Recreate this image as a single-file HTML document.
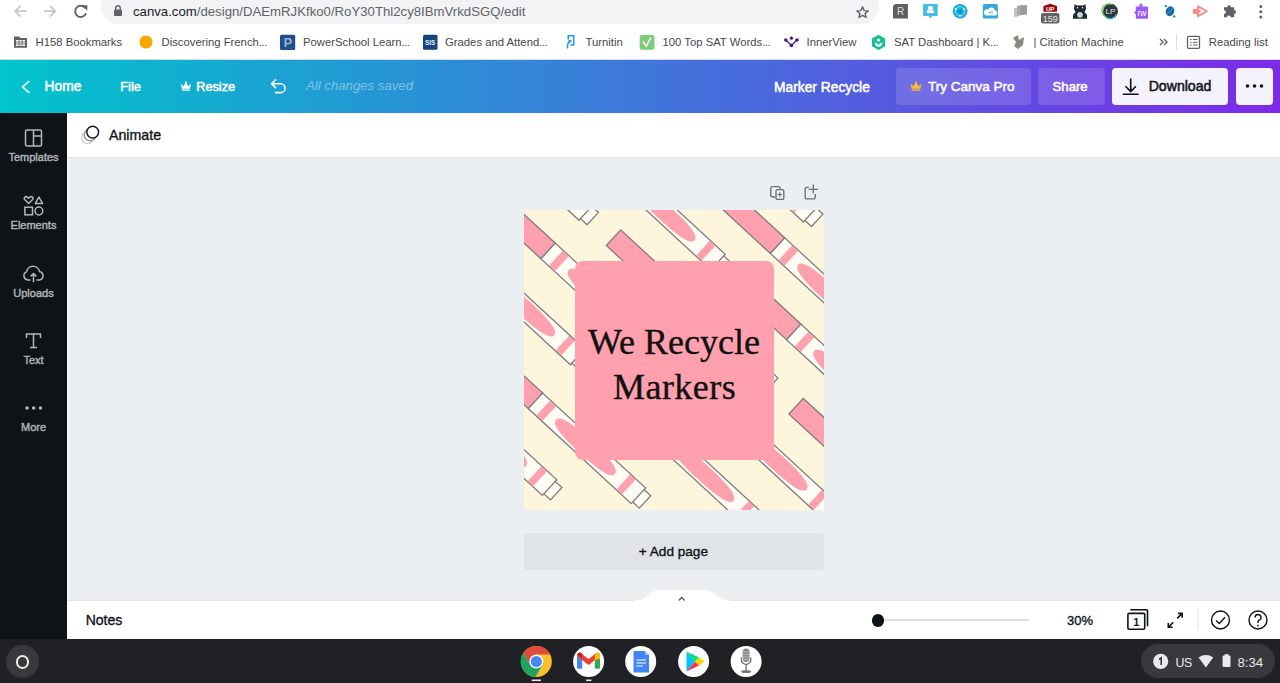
<!DOCTYPE html>
<html><head><meta charset="utf-8">
<style>
*{box-sizing:border-box;margin:0;padding:0}
html,body{width:1280px;height:683px;overflow:hidden;background:#fff;font-family:"Liberation Sans",sans-serif}
.abs{position:absolute}
.t{position:absolute;line-height:1;white-space:nowrap}
svg{position:absolute;overflow:visible}
#chrome{position:absolute;left:0;top:0;width:1280px;height:60px;background:#fff;border-bottom:1px solid #dadce0}
#url{position:absolute;left:101px;top:-12px;width:778px;height:36px;background:#f1f3f4;border-radius:18px}
.urltxt{left:133px;top:4.8px;font-size:13.2px;color:#5f6368}
.urltxt b{font-weight:normal;color:#202124}
.bm span{}
.bm{top:37.4px;font-size:11.3px;color:#45484c}
#hdr{position:absolute;left:0;top:60px;width:1280px;height:53px;background:linear-gradient(90deg,#00c4cc 0%,#7d2ae8 100%)}
.ht{color:#fff;font-size:13.2px;-webkit-text-stroke-width:.5px}
.sb{-webkit-text-stroke-width:.35px}
.btn{position:absolute;border-radius:4px}
#side{position:absolute;left:0;top:113px;width:67px;height:526px;background:#0e1318}
.sl{left:0;width:67px;text-align:center;color:#aeb1b4;font-size:11px;-webkit-text-stroke-width:.45px}
#tb{position:absolute;left:67px;top:113px;width:1213px;height:45px;background:#fff;border-bottom:1px solid #e0e2e6}
#work{position:absolute;left:67px;top:158px;width:1213px;height:442px;background:#eceff2}
#wl{position:absolute;left:67px;top:158px;width:1.5px;height:442px;background:#f5f6f8}
#notes{position:absolute;left:67px;top:600px;width:1213px;height:39px;background:#fff;border-top:1px solid #e3e5e8}
#task{position:absolute;left:0;top:639px;width:1280px;height:44px;background:#202124}
</style></head><body>
<div id="chrome">
  <div id="url"></div>
  <!-- back / fwd / reload -->
  <svg style="left:0;top:0" width="100" height="28">
    <path d="M26.5 11.2H16.2M20.6 5.8L15.2 11.2L20.6 16.6" fill="none" stroke="#c4c7c9" stroke-width="1.8"/>
    <path d="M44 11.2H54.3M49.9 5.8L55.3 11.2L49.9 16.6" fill="none" stroke="#c4c7c9" stroke-width="1.8"/>
    <path d="M85.3 8.2A5.6 5.6 0 1 0 86 13.2" fill="none" stroke="#5f6368" stroke-width="1.9"/>
    <path d="M81.8 5.2H87.3V10.7Z" fill="#5f6368"/>
  </svg>
  <svg style="left:110px;top:0" width="20" height="24">
    <rect x="4" y="9.5" width="8" height="6.5" rx="1" fill="#5f6368"/>
    <path d="M5.8 9.8V8A2.2 2.2 0 0 1 10.2 8V9.8" fill="none" stroke="#5f6368" stroke-width="1.5"/>
  </svg>
  <div class="t urltxt"><b>canva.com</b>/design/DAEmRJKfko0/RoY30Thl2cy8IBmVrkdSGQ/edit</div>
  <svg style="left:850px;top:0" width="30" height="28">
    <path d="M12.5 6.8L14.1 10.6L18.2 10.9L15.1 13.5L16.1 17.5L12.5 15.3L8.9 17.5L9.9 13.5L6.8 10.9L10.9 10.6Z" fill="none" stroke="#5f6368" stroke-width="1.4" stroke-linejoin="round"/>
  </svg>
  <!-- extensions -->
  <svg style="left:880px;top:0" width="400" height="28">
    <path d="M15 3.9H27.9V18.5H13V5.9Z" fill="#5f5f5f"/>
    <text x="20.5" y="15.2" font-family="Liberation Sans" font-size="10" fill="#dcdcdc" text-anchor="middle">R</text>
    <path d="M43.1 3.9H57.7V15.9H52.4L50.4 18.5L48.4 15.9H43.1Z" fill="#45bfe6"/>
    <rect x="48" y="6.3" width="4.8" height="3.7" rx="1" fill="#fff"/><path d="M46.8 13V11.2Q46.8 10.3 47.8 10.3H53Q54 10.3 54 11.2V13Z" fill="#fff"/>
    <circle cx="80.6" cy="11.6" r="7.4" fill="#9a9a9a" opacity=".45"/>
    <circle cx="80" cy="11.2" r="7.3" fill="#1aaede"/>
    <circle cx="80" cy="11.2" r="4.6" fill="none" stroke="#aee6f7" stroke-width=".8"/>
    <circle cx="80" cy="11.2" r="2" fill="#0f8fc4"/>
    <circle cx="76" cy="9" r=".9" fill="#fff"/><circle cx="84" cy="9" r=".9" fill="#fff"/><circle cx="80" cy="15.8" r=".9" fill="#fff"/>
    <rect x="102.8" y="3.9" width="15.1" height="14.6" rx="1.5" fill="#36a7da"/>
    <path d="M106.2 15.5H114.8A2.4 2.4 0 0 0 115 10.6A3.7 3.7 0 0 0 108.1 9.4A3 3 0 0 0 106.2 15.5Z" fill="#fff"/>
    <path d="M109 12.5H111M112 10.5V13.5" stroke="#36a7da" stroke-width=".9"/>
    <path d="M134 8.5L138.5 7.3V16.5L134 17.3Z" fill="#c2c2c2"/>
    <path d="M137 6L142 4.7V15L137 16Z" fill="#a9a9a9"/>
    <path d="M140.5 5.5L147 5V14.5L140.5 15.3Z" fill="#9a9a9a"/>
    <path d="M163.4 11.7V6L170.2 3.75L177 6V11.7Z" fill="#9b0b0b"/>
    <text x="170.2" y="11.2" font-family="Liberation Sans" font-weight="bold" font-size="6" fill="#fff" text-anchor="middle">UP</text>
    <rect x="161" y="13.1" width="18.4" height="10.3" rx="1.8" fill="#626262"/>
    <text x="170.2" y="21.7" font-family="Liberation Sans" font-size="9" fill="#e6e6e6" text-anchor="middle">159</text>
    <path d="M194.5 4.2L197 5.6H203L205.5 4.2L206 9L204.5 12L207 15V18.7H193V15L195.5 12L194 9Z" fill="#1c2a33"/>
    <circle cx="197.5" cy="7.8" r=".8" fill="#fff"/><circle cx="202.5" cy="7.8" r=".8" fill="#fff"/>
    <circle cx="200" cy="14.8" r="2.9" fill="#cfd4d8"/>
    <circle cx="230.5" cy="11.25" r="7.5" fill="#2e3740"/>
    <path d="M231.5 4.5A6.7 6.7 0 0 0 226 17" fill="none" stroke="#5fd33a" stroke-width="1.3"/>
    <path d="M226 17A6.7 6.7 0 0 0 236.5 14" fill="none" stroke="#2a9fc0" stroke-width="1.3"/>
    <text x="230.5" y="14.3" font-family="Liberation Sans" font-size="8" fill="#e8e8e8" text-anchor="middle">LP</text>
    <path d="M255.8 6.6H259.4V5.1A1.5 1.5 0 0 1 262.4 5.1V6.6H268V18.75H255.8V14A1.4 1.4 0 0 1 255.8 11.2Z" fill="#9b5cf6"/>
    <text x="262" y="15.6" font-family="Liberation Sans" font-size="8.5" fill="#fff" text-anchor="middle">rw</text>
    <ellipse cx="290" cy="11.25" rx="4.2" ry="5" transform="rotate(20 290 11.25)" fill="#1a6aa8"/>
    <path d="M287.5 14L292.5 8.5" stroke="#5fa8dc" stroke-width=".8"/>
    <circle cx="285.8" cy="6.1" r="1.2" fill="#1a80c4"/><circle cx="294.2" cy="16.4" r="1.2" fill="#1a80c4"/>
    <rect x="313" y="8.9" width="4.2" height="5.1" fill="#ff8585"/>
    <path d="M318 6.2L326.8 11.25L318 16.3Z" fill="none" stroke="#ff8585" stroke-width="1.9" stroke-linejoin="round"/>
    <path d="M318 9L321.5 11.25L318 13.5Z" fill="#ff8585"/>
    <path d="M344 7.2H347.2A1.9 1.9 0 0 1 351 7.2H354.2V10.2A1.9 1.9 0 0 1 354.2 14V17.3H350.8A1.9 1.9 0 0 0 347 17.3H344V14A1.9 1.9 0 0 0 344 10.2Z" fill="#5f6368"/>
    <circle cx="380.8" cy="6.6" r="1.5" fill="#5f6368"/><circle cx="380.8" cy="11.8" r="1.5" fill="#5f6368"/><circle cx="380.8" cy="17" r="1.5" fill="#5f6368"/>
  </svg>
  <!-- bookmark icons -->
  <svg style="left:0;top:28px" width="1280" height="31">
    <path d="M14 8.5H19L20.5 10H27V19.7H14Z" fill="#5f6368"/>
    <rect x="16" y="12" width="9" height="6" fill="#fff"/>
    <path d="M16 14H25M16 16H25M19 12V18M22 12V18" stroke="#5f6368" stroke-width=".8"/>
    <circle cx="146" cy="14" r="6.6" fill="#f2a900"/>
    <rect x="280" y="6.7" width="15.2" height="15.3" rx="1.5" fill="#1f4e8c"/>
    <text x="287.8" y="19" font-family="Liberation Sans" font-weight="bold" font-size="12.5" fill="#9db3d3" text-anchor="middle">P</text>
    <rect x="423" y="6.7" width="14.5" height="15" rx="1.5" fill="#14437f"/>
    <text x="430.2" y="16.8" font-family="Liberation Sans" font-weight="bold" font-size="6.3" fill="#e8eef7" text-anchor="middle">SIS</text>
    <path d="M568.2 11.5V7.8H573.7V17H570.5" fill="none" stroke="#2196f3" stroke-width="1.5"/>
    <path d="M570.3 13.2Q566.8 15 567.6 20.5" fill="none" stroke="#2196f3" stroke-width="1.5"/>
    <path d="M568.2 11.8L572.2 12.6L569.3 15.5Z" fill="#2196f3"/>
    <rect x="639.7" y="7" width="14.8" height="14.7" rx="2" fill="#7ecb7c"/>
    <path d="M643 13.5L646.3 18L651 9.5" fill="none" stroke="#fff" stroke-width="1.5"/>
    <path d="M785.8 12L791.4 17.4L797 12" fill="none" stroke="#4b1a7c" stroke-width="1.4"/>
    <circle cx="791.4" cy="10.2" r="1.6" fill="#4b1a7c"/><circle cx="785.8" cy="12" r="1.8" fill="#4b1a7c"/><circle cx="797" cy="12" r="1.8" fill="#4b1a7c"/><circle cx="791.4" cy="17.4" r="1.8" fill="#4b1a7c"/>
    <path d="M878.6 6.8L885.2 10.6V18.2L878.6 22L872 18.2V10.6Z" fill="#14bf96"/>
    <circle cx="878.6" cy="12" r="1.6" fill="#fff"/>
    <path d="M874.8 14.5Q875 18.6 878.6 18.8Q882.2 18.6 882.4 14.5Q879.5 14.8 878.6 17Q877.7 14.8 874.8 14.5Z" fill="#fff"/>
    <path d="M1013 10L1018 7L1019 12L1024 9L1023 17L1018 21L1014 18L1016 14Z" fill="#8a8a7e"/>
    <path d="M1160 11L1163 14L1160 17M1164 11L1167 14L1164 17" fill="none" stroke="#5f6368" stroke-width="1.4"/>
    <rect x="1176" y="6" width="1" height="16" fill="#dadce0"/>
    <rect x="1187.5" y="8.3" width="12" height="12" rx="1" fill="none" stroke="#5f6368" stroke-width="1.3"/>
    <path d="M1190 11.5H1191.5M1193 11.5H1197.5M1190 14.3H1191.5M1193 14.3H1197.5M1190 17H1191.5M1193 17H1197.5" stroke="#5f6368" stroke-width="1"/>
  </svg>
  <div class="t bm" style="left:35.5px">H158 Bookmarks</div>
  <div class="t bm" style="left:161.5px">Discovering French<span style="letter-spacing:-.45px">...</span></div>
  <div class="t bm" style="left:303px">PowerSchool Learn<span style="letter-spacing:-.45px">...</span></div>
  <div class="t bm" style="left:445px">Grades and Attend<span style="letter-spacing:-.45px">...</span></div>
  <div class="t bm" style="left:585.5px">Turnitin</div>
  <div class="t bm" style="left:662.5px">100 Top SAT Words<span style="letter-spacing:-.45px">...</span></div>
  <div class="t bm" style="left:806.5px">InnerView</div>
  <div class="t bm" style="left:894px">SAT Dashboard | K<span style="letter-spacing:-.45px">...</span></div>
  <div class="t bm" style="left:1033.5px">| Citation Machine</div>
  <div class="t bm" style="left:1208.8px">Reading list</div>
</div>

<div id="hdr">
  <div class="btn" style="left:895.6px;top:7.7px;width:135px;height:37px;background:rgba(255,255,255,.14)"></div>
  <div class="btn" style="left:1038px;top:8px;width:67px;height:36.5px;background:rgba(255,255,255,.14)"></div>
  <div class="btn" style="left:1112px;top:8px;width:116px;height:37px;background:#f4f2fc"></div>
  <div class="btn" style="left:1236px;top:8px;width:37px;height:37px;background:#f4f2fc"></div>
  <svg style="left:0;top:0" width="1280" height="53">
    <path d="M29.3 21L22.6 26.9L29.3 32.8" fill="none" stroke="#fff" stroke-width="1.6"/>
    <path d="M180.8 23.6L183.5 26.3L185.9 21.9L188.3 26.3L191 23.6L189.9 28.7H181.9Z" fill="#fff"/><circle cx="185.9" cy="22.2" r=".9" fill="#fff"/><rect x="181.9" y="29.4" width="8" height="1.3" fill="#fff"/>
    <path d="M276 19.3L271.6 23.7L276 28.1M271.6 23.7H280.6A4.45 4.45 0 0 1 280.6 32.6H275" fill="none" stroke="#fff" stroke-width="1.6"/>
    <path d="M910.5 23.6L913.3 26.3L916 21.9L918.7 26.3L921.5 23.6L920.4 28.7H911.6Z" fill="#ffbb2f"/><circle cx="916" cy="22.2" r=".9" fill="#ffbb2f"/><rect x="911.6" y="29.4" width="8.8" height="1.3" fill="#ffbb2f"/>
    <path d="M1130.7 18.6V31M1125.5 26.3L1130.7 31.5L1135.9 26.3M1122.8 34.3H1138.7" fill="none" stroke="#0e1318" stroke-width="1.6"/>
    <circle cx="1247.5" cy="26" r="1.8" fill="#0e1318"/><circle cx="1254.5" cy="26" r="1.8" fill="#0e1318"/><circle cx="1261.5" cy="26" r="1.8" fill="#0e1318"/>
  </svg>
  <div class="t ht" style="left:44.5px;top:20.00px;font-size:13.8px">Home</div>
  <div class="t ht" style="left:120.3px;top:20.90px;font-size:12.8px">File</div>
  <div class="t ht" style="left:196.3px;top:20.95px;font-size:12.7px">Resize</div>
  <div class="t" style="left:306px;top:19.4px;font-size:13.2px;font-style:italic;color:rgba(255,255,255,.42)">All changes saved</div>
  <div class="t ht" style="left:774px;top:20.80px;font-size:13.8px">Marker Recycle</div>
  <div class="t ht" style="left:928px;top:19.70px;font-size:13.5px">Try Canva Pro</div>
  <div class="t ht" style="left:1052.5px;top:20.10px;font-size:13.2px">Share</div>
  <div class="t ht" style="left:1148.7px;top:19.30px;font-size:14.1px;color:#0e1318">Download</div>
</div>

<div id="side">
  <svg style="left:0;top:0" width="67" height="526" fill="none" stroke="#b4b6b9" stroke-width="1.5">
    <rect x="25.5" y="17" width="16" height="16" rx="1.5"/>
    <path d="M33.5 17V33M33.5 23H41.5"/>
    <path d="M28.6 90.5L24.6 86.5Q23.5 85.2 24.6 84.2Q25.9 83.1 27.3 84.1L28.6 85.3L29.9 84.1Q31.3 83.1 32.6 84.2Q33.7 85.2 32.6 86.5Z" stroke-linejoin="round"/>
    <path d="M38.9 84L42.6 90.6H35.2Z" stroke-linejoin="round"/>
    <rect x="24.9" y="94.2" width="7.6" height="7.6"/>
    <circle cx="38.9" cy="98" r="3.9"/>
    <path d="M30.5 167H27.8A4.2 4.2 0 0 1 26.6 158.9A6.6 6.6 0 0 1 39.6 158.6A4.3 4.3 0 0 1 39.6 167H36.5M33.5 169.3V160.5M30.6 163.4L33.5 160.5L36.4 163.4"/>
    <path d="M26.5 225V221H40.5V225M33.5 221V234.5M30 234.5H37"/>
  </svg>
  <svg style="left:0;top:0" width="67" height="526">
    <circle cx="27" cy="295" r="1.8" fill="#b4b6b9"/><circle cx="33.7" cy="295" r="1.8" fill="#b4b6b9"/><circle cx="40.4" cy="295" r="1.8" fill="#b4b6b9"/>
  </svg>
  <div class="t sl" style="top:39.4px">Templates</div>
  <div class="t sl" style="top:106.7px">Elements</div>
  <div class="t sl" style="top:174.7px">Uploads</div>
  <div class="t sl" style="top:241.9px">Text</div>
  <div class="t sl" style="top:309.4px">More</div>
</div>

<div id="tb">
  <svg style="left:0;top:0" width="60" height="44">
    <circle cx="20.6" cy="24.6" r="5.9" fill="#fff" stroke="#c9cbce" stroke-width="1.2"/>
    <circle cx="23.1" cy="21.9" r="5.9" fill="#fff" stroke="#8e9195" stroke-width="1.3"/>
    <circle cx="25.7" cy="19.1" r="5.9" fill="#fff" stroke="#1a1d21" stroke-width="1.5"/>
  </svg>
  <div class="t sb" style="left:42px;top:14.8px;font-size:14.2px;color:#0e1318">Animate</div>
</div>

<div id="work">
  <svg style="left:700px;top:25px" width="60" height="24" fill="none" stroke="#6b6e72" stroke-width="1.35">
    <path d="M8 14H5.2A1.5 1.5 0 0 1 3.75 12.5V5.1A1.5 1.5 0 0 1 5.25 3.65H11.6A1.5 1.5 0 0 1 13.1 5.15V6.6"/>
    <rect x="9" y="6.6" width="7.8" height="9.8" rx="1.5"/>
    <path d="M12.8 9.3V13.7M10.6 11.5H15" stroke-width="1.15"/>
    <path d="M42 4.35H39.65A1.5 1.5 0 0 0 38.15 5.85V14.35A1.5 1.5 0 0 0 39.65 15.85H46.75A1.5 1.5 0 0 0 48.25 14.35V11M46.3 1.5V10.3M41.6 6.3H51"/>
  </svg>
  <div id="design" class="abs" style="left:457px;top:52px;width:300px;height:300px;background:#fef5dd;overflow:hidden">
<svg width="300" height="300" viewBox="0 0 300 300" style="left:0;top:0">
<rect width="300" height="300" fill="#fef5dd"/>
<g transform="translate(0 -260.3) rotate(42.7)"><rect x="183.0" y="-10.6" width="67" height="21.2" fill="#ffa0af" stroke="#7d7d7d" stroke-width="1.3"/><rect x="388.0" y="-8.4" width="11" height="16.8" fill="#fffcf3" stroke="#7d7d7d" stroke-width="1.3"/><rect x="250.0" y="-10.6" width="140" height="21.2" fill="#fffcf3" stroke="#7d7d7d" stroke-width="1.3"/><rect x="260.6" y="-9.95" width="8.1" height="19.90" fill="#ffa0af"/><rect x="369.5" y="-9.95" width="7.5" height="19.90" fill="#ffa0af"/><path d="M278.0 0C278.0 -5.90 291.0 -8.2 318.0 -8.2C345.0 -8.2 358.0 -5.90 358.0 0C358.0 5.90 345.0 8.2 318.0 8.2C291.0 8.2 278.0 5.90 278.0 0Z" fill="#ffa0af"/></g>
<g transform="translate(0 -198.3) rotate(42.7)"><rect x="278.0" y="-10.6" width="67" height="21.2" fill="#ffa0af" stroke="#7d7d7d" stroke-width="1.3"/><rect x="483.0" y="-8.4" width="11" height="16.8" fill="#fffcf3" stroke="#7d7d7d" stroke-width="1.3"/><rect x="345.0" y="-10.6" width="140" height="21.2" fill="#fffcf3" stroke="#7d7d7d" stroke-width="1.3"/><rect x="355.6" y="-9.95" width="8.1" height="19.90" fill="#ffa0af"/><rect x="464.5" y="-9.95" width="7.5" height="19.90" fill="#ffa0af"/><path d="M373.0 0C373.0 -5.90 386.0 -8.2 413.0 -8.2C440.0 -8.2 453.0 -5.90 453.0 0C453.0 5.90 440.0 8.2 413.0 8.2C386.0 8.2 373.0 5.90 373.0 0Z" fill="#ffa0af"/></g>
<g transform="translate(0 -127) rotate(42.7)"><rect x="57.0" y="-10.6" width="67" height="21.2" fill="#ffa0af" stroke="#7d7d7d" stroke-width="1.3"/><rect x="262.0" y="-8.4" width="11" height="16.8" fill="#fffcf3" stroke="#7d7d7d" stroke-width="1.3"/><rect x="124.0" y="-10.6" width="140" height="21.2" fill="#fffcf3" stroke="#7d7d7d" stroke-width="1.3"/><rect x="134.6" y="-9.95" width="8.1" height="19.90" fill="#ffa0af"/><rect x="243.5" y="-9.95" width="7.5" height="19.90" fill="#ffa0af"/><path d="M152.0 0C152.0 -5.90 165.0 -8.2 192.0 -8.2C219.0 -8.2 232.0 -5.90 232.0 0C232.0 5.90 219.0 8.2 192.0 8.2C165.0 8.2 152.0 5.90 152.0 0Z" fill="#ffa0af"/></g>
<g transform="translate(0 -127) rotate(42.7)"><rect x="300.0" y="-10.6" width="67" height="21.2" fill="#ffa0af" stroke="#7d7d7d" stroke-width="1.3"/><rect x="505.0" y="-8.4" width="11" height="16.8" fill="#fffcf3" stroke="#7d7d7d" stroke-width="1.3"/><rect x="367.0" y="-10.6" width="140" height="21.2" fill="#fffcf3" stroke="#7d7d7d" stroke-width="1.3"/><rect x="377.6" y="-9.95" width="8.1" height="19.90" fill="#ffa0af"/><rect x="486.5" y="-9.95" width="7.5" height="19.90" fill="#ffa0af"/><path d="M395.0 0C395.0 -5.90 408.0 -8.2 435.0 -8.2C462.0 -8.2 475.0 -5.90 475.0 0C475.0 5.90 462.0 8.2 435.0 8.2C408.0 8.2 395.0 5.90 395.0 0Z" fill="#ffa0af"/></g>
<g transform="translate(0 -54.9) rotate(42.7)"><rect x="-122.4" y="-10.6" width="67" height="21.2" fill="#ffa0af" stroke="#7d7d7d" stroke-width="1.3"/><rect x="82.6" y="-8.4" width="11" height="16.8" fill="#fffcf3" stroke="#7d7d7d" stroke-width="1.3"/><rect x="-55.4" y="-10.6" width="140" height="21.2" fill="#fffcf3" stroke="#7d7d7d" stroke-width="1.3"/><rect x="-44.8" y="-9.95" width="8.1" height="19.90" fill="#ffa0af"/><rect x="64.1" y="-9.95" width="7.5" height="19.90" fill="#ffa0af"/><path d="M-27.4 0C-27.4 -5.90 -14.4 -8.2 12.6 -8.2C39.6 -8.2 52.6 -5.90 52.6 0C52.6 5.90 39.6 8.2 12.6 8.2C-14.4 8.2 -27.4 5.90 -27.4 0Z" fill="#ffa0af"/></g>
<g transform="translate(0 -54.9) rotate(42.7)"><rect x="121.8" y="-10.6" width="67" height="21.2" fill="#ffa0af" stroke="#7d7d7d" stroke-width="1.3"/><rect x="326.8" y="-8.4" width="11" height="16.8" fill="#fffcf3" stroke="#7d7d7d" stroke-width="1.3"/><rect x="188.8" y="-10.6" width="140" height="21.2" fill="#fffcf3" stroke="#7d7d7d" stroke-width="1.3"/><rect x="199.3" y="-9.95" width="8.1" height="19.90" fill="#ffa0af"/><rect x="308.2" y="-9.95" width="7.5" height="19.90" fill="#ffa0af"/><path d="M216.8 0C216.8 -5.90 229.8 -8.2 256.8 -8.2C283.8 -8.2 296.8 -5.90 296.8 0C296.8 5.90 283.8 8.2 256.8 8.2C229.8 8.2 216.8 5.90 216.8 0Z" fill="#ffa0af"/></g>
<g transform="translate(0 -54.9) rotate(42.7)"><rect x="370.2" y="-10.6" width="67" height="21.2" fill="#ffa0af" stroke="#7d7d7d" stroke-width="1.3"/><rect x="575.2" y="-8.4" width="11" height="16.8" fill="#fffcf3" stroke="#7d7d7d" stroke-width="1.3"/><rect x="437.2" y="-10.6" width="140" height="21.2" fill="#fffcf3" stroke="#7d7d7d" stroke-width="1.3"/><rect x="447.9" y="-9.95" width="8.1" height="19.90" fill="#ffa0af"/><rect x="556.8" y="-9.95" width="7.5" height="19.90" fill="#ffa0af"/><path d="M465.2 0C465.2 -5.90 478.2 -8.2 505.2 -8.2C532.2 -8.2 545.2 -5.90 545.2 0C545.2 5.90 532.2 8.2 505.2 8.2C478.2 8.2 465.2 5.90 465.2 0Z" fill="#ffa0af"/></g>
<g transform="translate(0 18.7) rotate(42.7)"><rect x="-34.2" y="-10.6" width="67" height="21.2" fill="#ffa0af" stroke="#7d7d7d" stroke-width="1.3"/><rect x="170.8" y="-8.4" width="11" height="16.8" fill="#fffcf3" stroke="#7d7d7d" stroke-width="1.3"/><rect x="32.8" y="-10.6" width="140" height="21.2" fill="#fffcf3" stroke="#7d7d7d" stroke-width="1.3"/><rect x="43.4" y="-9.95" width="8.1" height="19.90" fill="#ffa0af"/><rect x="152.3" y="-9.95" width="7.5" height="19.90" fill="#ffa0af"/><path d="M60.8 0C60.8 -5.90 73.8 -8.2 100.8 -8.2C127.8 -8.2 140.8 -5.90 140.8 0C140.8 5.90 127.8 8.2 100.8 8.2C73.8 8.2 60.8 5.90 60.8 0Z" fill="#ffa0af"/></g>
<g transform="translate(0 18.7) rotate(42.7)"><rect x="209.6" y="-10.6" width="67" height="21.2" fill="#ffa0af" stroke="#7d7d7d" stroke-width="1.3"/><rect x="414.6" y="-8.4" width="11" height="16.8" fill="#fffcf3" stroke="#7d7d7d" stroke-width="1.3"/><rect x="276.6" y="-10.6" width="140" height="21.2" fill="#fffcf3" stroke="#7d7d7d" stroke-width="1.3"/><rect x="287.2" y="-9.95" width="8.1" height="19.90" fill="#ffa0af"/><rect x="396.1" y="-9.95" width="7.5" height="19.90" fill="#ffa0af"/><path d="M304.6 0C304.6 -5.90 317.6 -8.2 344.6 -8.2C371.6 -8.2 384.6 -5.90 384.6 0C384.6 5.90 371.6 8.2 344.6 8.2C317.6 8.2 304.6 5.90 304.6 0Z" fill="#ffa0af"/></g>
<g transform="translate(0 97.5) rotate(42.7)"><rect x="-134.1" y="-10.6" width="67" height="21.2" fill="#ffa0af" stroke="#7d7d7d" stroke-width="1.3"/><rect x="70.9" y="-8.4" width="11" height="16.8" fill="#fffcf3" stroke="#7d7d7d" stroke-width="1.3"/><rect x="-67.1" y="-10.6" width="140" height="21.2" fill="#fffcf3" stroke="#7d7d7d" stroke-width="1.3"/><rect x="-56.5" y="-9.95" width="8.1" height="19.90" fill="#ffa0af"/><rect x="52.4" y="-9.95" width="7.5" height="19.90" fill="#ffa0af"/><path d="M-39.1 0C-39.1 -5.90 -26.1 -8.2 0.9 -8.2C27.9 -8.2 40.9 -5.90 40.9 0C40.9 5.90 27.9 8.2 0.9 8.2C-26.1 8.2 -39.1 5.90 -39.1 0Z" fill="#ffa0af"/></g>
<g transform="translate(0 97.5) rotate(42.7)"><rect x="109.9" y="-10.6" width="67" height="21.2" fill="#ffa0af" stroke="#7d7d7d" stroke-width="1.3"/><rect x="314.9" y="-8.4" width="11" height="16.8" fill="#fffcf3" stroke="#7d7d7d" stroke-width="1.3"/><rect x="176.9" y="-10.6" width="140" height="21.2" fill="#fffcf3" stroke="#7d7d7d" stroke-width="1.3"/><rect x="187.5" y="-9.95" width="8.1" height="19.90" fill="#ffa0af"/><rect x="296.4" y="-9.95" width="7.5" height="19.90" fill="#ffa0af"/><path d="M204.9 0C204.9 -5.90 217.9 -8.2 244.9 -8.2C271.9 -8.2 284.9 -5.90 284.9 0C284.9 5.90 271.9 8.2 244.9 8.2C217.9 8.2 204.9 5.90 204.9 0Z" fill="#ffa0af"/></g>
<g transform="translate(0 180.2) rotate(42.7)"><rect x="-51.3" y="-10.6" width="67" height="21.2" fill="#ffa0af" stroke="#7d7d7d" stroke-width="1.3"/><rect x="153.7" y="-8.4" width="11" height="16.8" fill="#fffcf3" stroke="#7d7d7d" stroke-width="1.3"/><rect x="15.7" y="-10.6" width="140" height="21.2" fill="#fffcf3" stroke="#7d7d7d" stroke-width="1.3"/><rect x="26.3" y="-9.95" width="8.1" height="19.90" fill="#ffa0af"/><rect x="135.2" y="-9.95" width="7.5" height="19.90" fill="#ffa0af"/><path d="M43.7 0C43.7 -5.90 56.7 -8.2 83.7 -8.2C110.7 -8.2 123.7 -5.90 123.7 0C123.7 5.90 110.7 8.2 83.7 8.2C56.7 8.2 43.7 5.90 43.7 0Z" fill="#ffa0af"/></g>
<g transform="translate(0 254) rotate(42.7)"><rect x="-172.2" y="-10.6" width="67" height="21.2" fill="#ffa0af" stroke="#7d7d7d" stroke-width="1.3"/><rect x="32.8" y="-8.4" width="11" height="16.8" fill="#fffcf3" stroke="#7d7d7d" stroke-width="1.3"/><rect x="-105.2" y="-10.6" width="140" height="21.2" fill="#fffcf3" stroke="#7d7d7d" stroke-width="1.3"/><rect x="-94.6" y="-9.95" width="8.1" height="19.90" fill="#ffa0af"/><rect x="14.3" y="-9.95" width="7.5" height="19.90" fill="#ffa0af"/><path d="M-77.2 0C-77.2 -5.90 -64.2 -8.2 -37.2 -8.2C-10.2 -8.2 2.8 -5.90 2.8 0C2.8 5.90 -10.2 8.2 -37.2 8.2C-64.2 8.2 -77.2 5.90 -77.2 0Z" fill="#ffa0af"/></g>
<rect x="51" y="51" width="199" height="199" rx="8" fill="#ffa0af"/>
</svg>
<div class="t" style="left:64px;top:114px;font-family:'Liberation Serif',serif;font-size:36px;color:#111;-webkit-text-stroke:.35px #111">We Recycle</div>
<div class="t" style="left:89px;top:158.7px;font-family:'Liberation Serif',serif;font-size:36px;letter-spacing:.45px;color:#111;-webkit-text-stroke:.35px #111">Markers</div>
  </div>
  <div class="abs" style="left:457.4px;top:374.7px;width:299.6px;height:37.3px;background:#e0e3e7;border-radius:4px"></div>
  <div class="t sb" style="left:571.8px;top:386.9px;font-size:13.6px;color:#0e1318">+ Add page</div>
  <svg style="left:563px;top:422px;z-index:5" width="104" height="24">
    <path d="M8 20.6C17 20.6 19 9.8 30 9.8H74C85 9.8 87 20.6 96 20.6" fill="none" stroke="#e3e5e8" stroke-width="1"/><path d="M5 22.5V20.1H8C17 20.1 19 9.8 30 9.8H74C85 9.8 87 20.1 96 20.1H99V22.5Z" fill="#fff"/>
    <path d="M48.7 20.5L51.7 17.5L54.7 20.5" fill="none" stroke="#5b5e62" stroke-width="1.35"/>
  </svg>
</div>

<div id="wl"></div>
<div id="notes">
  <div class="t sb" style="left:18.7px;top:12.15px;font-size:14px;color:#0e1318">Notes</div>
  <div class="abs" style="left:810px;top:18px;width:152px;height:2px;background:#dfe1e5"></div>
  <div class="abs" style="left:804.5px;top:13px;width:12.5px;height:12.5px;border-radius:50%;background:#0e1318"></div>
  <div class="t sb" style="left:1000px;top:13.2px;font-size:13px;color:#0e1318">30%</div>
  <svg style="left:1000px;top:0" width="213" height="38" fill="none" stroke="#0e1318" stroke-width="1.4">
    <rect x="60.9" y="12.4" width="16.8" height="15.9" rx="1.2" stroke-width="1.6"/>
    <path d="M63.3 8.8H79.7A0.8 0.8 0 0 1 80.5 9.6V25.2" stroke-width="1.6"/>
    <text x="69.3" y="24.6" font-family="Liberation Sans" font-weight="bold" font-size="11" fill="#1a1d21" stroke="none" text-anchor="middle">1</text>
    <path d="M101.3 26.3L106.3 21.3M101.3 22V26.3H105.6M115.2 12.4L110.2 17.4M110.9 12.4H115.2V16.7" stroke-width="1.6"/>
    <rect x="130.5" y="8" width="1" height="21" fill="#dfe1e5" stroke="none"/>
    <circle cx="153.5" cy="19" r="9"/>
    <path d="M149 19.5L152.3 22.5L158 16.3"/>
    <circle cx="191" cy="19" r="9"/>
    <path d="M188 16.5A3 3 0 1 1 191.8 19.4Q191 19.8 191 21V22"/>
    <circle cx="191" cy="24.6" r=".9" fill="#0e1318" stroke="none"/>
  </svg>
</div>

<div id="task">
  <div class="abs" style="left:6px;top:6px;width:33px;height:33px;border-radius:50%;background:#38393b"></div>
  <div class="abs" style="left:15.8px;top:16.2px;width:13.4px;height:13.4px;border-radius:50%;border:2px solid #ececec"></div>
  <div class="abs" style="left:1141px;top:5.4px;width:134.3px;height:33.6px;border-radius:17px;background:#38393b"></div>
  <svg style="left:500px;top:0" width="780" height="44">
    <!-- chrome -->
    <circle cx="36.299999999999955" cy="22.5" r="15.5" fill="#fbc02d"/>
    <path d="M23.32 14.02A15.5 15.5 0 0 1 50.13 15.50L36.30 15.50L36.30 22.50L30.24 26.00Z" fill="#e04a3b"/>
    <path d="M35.45 37.98A15.5 15.5 0 0 1 23.32 14.02L30.24 26.00L36.30 22.50L42.36 26.00Z" fill="#1ea362"/>
    <circle cx="36.299999999999955" cy="22.5" r="7" fill="#fff"/>
    <circle cx="36.299999999999955" cy="22.5" r="5.6" fill="#4688f1"/>
    <rect x="31.7" y="40.5" width="9.3" height="1.6" fill="#e8eaed"/>
    <!-- gmail -->
    <circle cx="88.6" cy="22.5" r="15.5" fill="#fff"/>
    <rect x="77" y="16" width="5.2" height="13.7" rx="1.2" fill="#4285f4"/>
    <rect x="94.8" y="16" width="5.2" height="13.7" rx="1.2" fill="#34a853"/>
    <path d="M79.6 16L88.5 23.2L97.4 16" fill="none" stroke="#ea4335" stroke-width="4.8" stroke-linecap="round" stroke-linejoin="round"/>
    <path d="M77.2 16.2A2.6 2.6 0 0 1 81.5 14.2L82.2 14.8V19.8L77 15.6Z" fill="#c5221f"/>
    <path d="M94.8 15.2L96 14.2A2.6 2.6 0 0 1 100 16.2V19.5L94.8 21.5Z" fill="#fbbc04"/>
    <rect x="86" y="40.5" width="5.4" height="1.6" fill="#e8eaed"/>
    <!-- docs -->
    <circle cx="140.7" cy="22.5" r="15.5" fill="#fff"/>
    <path d="M133.5 12H145L149 16V33.5H133.5Z" fill="#4285f4"/>
    <path d="M145 12V16H149Z" fill="#a1c2fa"/>
    <path d="M136.5 21H146M136.5 24H146M136.5 27H143" stroke="#fff" stroke-width="1.2"/>
    <!-- play -->
    <circle cx="193.6" cy="22.5" r="15.5" fill="#fff"/>
    <path d="M186.5 12.5L195 22.5L186.5 32.5Z" fill="#00c3ff"/>
    <path d="M186.5 12.5L195 22.5L199 18.5Z" fill="#00e07a"/>
    <path d="M186.5 32.5L195 22.5L199 26.5Z" fill="#f53349"/>
    <path d="M199 18.5L204.5 22.5L199 26.5L195 22.5Z" fill="#ffd500"/>
    <!-- mic -->
    <circle cx="246.1" cy="22.5" r="15.5" fill="#fff"/>
    <rect x="242.6" y="9.5" width="7" height="13.5" rx="3.5" fill="#8a8a8a"/>
    <path d="M243 13H249.2M243 15.5H249.2M243 18H249.2M243 20.5H249.2" stroke="#c8c8c8" stroke-width=".7"/>
    <path d="M241.3 18.5V20.5A4.8 4.8 0 0 0 250.9 20.5V18.5M246.1 25.3V31" fill="none" stroke="#666" stroke-width="1.2"/>
    <ellipse cx="246.1" cy="32.5" rx="5" ry="1.6" fill="#777"/>
  </svg>
  <svg style="left:1130px;top:0" width="150" height="44">
    <circle cx="30.7" cy="22.4" r="7.6" fill="#e8eaed"/>
    <path d="M29 20.3L31.2 18.8V26" fill="none" stroke="#38393b" stroke-width="1.6"/>
    <path d="M68.6 18.6A12 12 0 0 1 83.2 18.6L75.9 28.4Z" fill="#e8eaed"/>
    <rect x="92.6" y="16.6" width="7.9" height="11.4" rx="1" fill="#e8eaed"/>
    <rect x="94.6" y="15.2" width="3.9" height="2" fill="#e8eaed"/>
  </svg>
  <div class="t" style="left:1175.5px;top:18.1px;font-size:12.4px;letter-spacing:-.4px;color:#e8eaed">US</div>
  <div class="t" style="left:1237.5px;top:16.8px;font-size:13.2px;color:#e8eaed">8:34</div>
</div>
</body></html>
